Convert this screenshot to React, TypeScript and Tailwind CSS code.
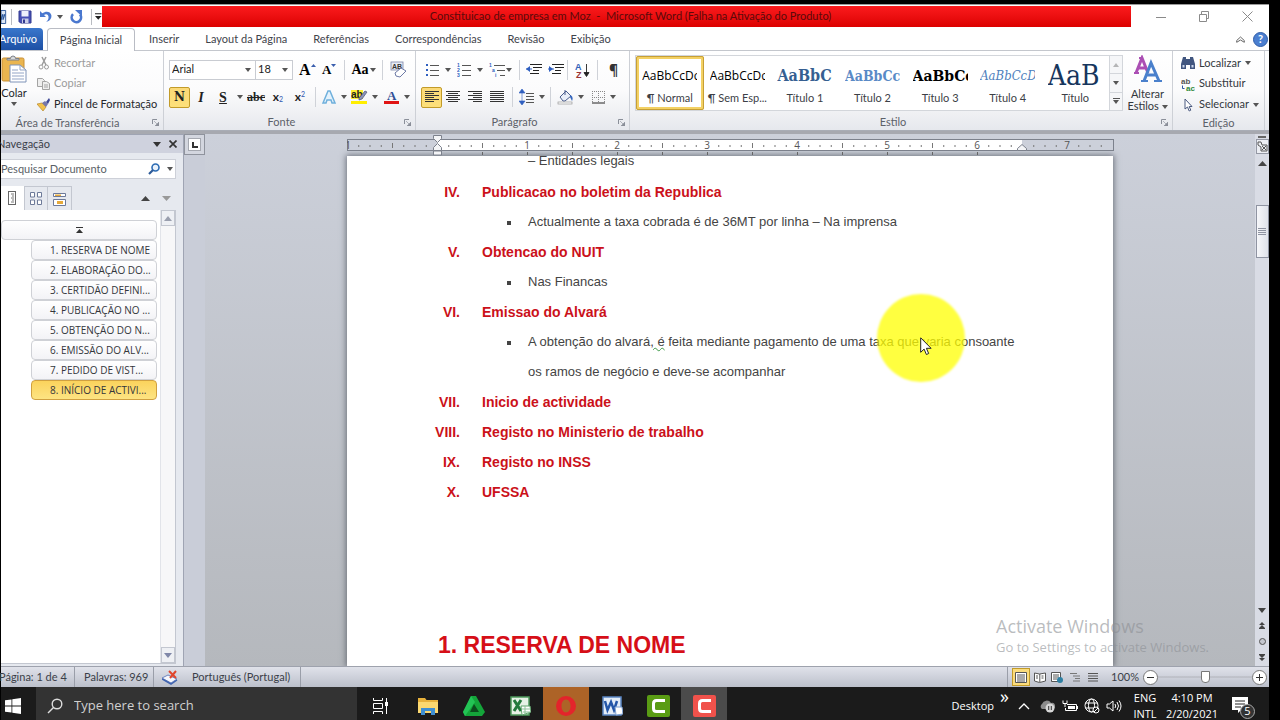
import React, { useState } from "react";

type Kids = { children?: React.ReactNode };

function Caret({ className = "" }: { className?: string }) {
  return (
    <svg width="6" height="4" viewBox="0 0 6 4" className={`shrink-0 ${className}`}>
      <path d="M0 0h6L3 4z" fill="#555" />
    </svg>
  );
}

function Sep() {
  return <div className="h-5 w-px shrink-0 bg-[#cfd2d8]" />;
}

function Tool({
  label,
  w = "w-[22px]",
  active = false,
  children,
}: Kids & { label: string; w?: string; active?: boolean }) {
  return (
    <button
      type="button"
      aria-label={label}
      className={`flex h-[21px] shrink-0 items-center justify-center ${w} ${
        active
          ? "rounded-xs border border-[#c29b29] bg-linear-to-b from-[#fbd977] to-[#fde07a]"
          : ""
      }`}
    >
      {children}
    </button>
  );
}

function Launcher() {
  return (
    <svg width="7" height="7" viewBox="0 0 7 7" className="absolute right-1 bottom-1">
      <path d="M0.500 5V0.500H5" fill="none" stroke="#8a8f99" />
      <path d="M2 2l3 3M7 3v4H3z" fill="#8a8f99" stroke="#8a8f99" strokeWidth="0.600" />
    </svg>
  );
}

function Group({
  title,
  className = "",
  launcher = true,
  children,
}: Kids & { title: string; className?: string; launcher?: boolean }) {
  return (
    <section
      className={`relative flex h-full flex-col border-r border-[#cdd0d6] ${className}`}
    >
      <div className="h-16">{children}</div>
      <h2 className={`text-center leading-4 text-[#5c6169] ${launcher ? "pr-4" : ""}`}>{title}</h2>
      {launcher && <Launcher />}
    </section>
  );
}

function Lines({
  rows,
  color = "#333",
}: {
  rows: [number, number][];
  color?: string;
}) {
  return (
    <svg width="14" height="12" viewBox="0 0 14 12">
      {rows.map(([x, w], i) => (
        <rect key={i} x={x} y={i * 2} width={w} height="1" fill={color} />
      ))}
    </svg>
  );
}

function TitleBar() {
  return (
    <header className="flex h-6 shrink-0 border-t border-[#9a9a9a] bg-white">
      <div className="flex w-[101px] shrink-0 items-center">
        <svg width="6" height="16" viewBox="0 0 6 16">
          <path d="M0 1h5v14H0z" fill="#dbe6f5" stroke="#2b579a" />
          <path d="M0 11l2-6M2 11l2-6" stroke="#2b579a" strokeWidth="1.500" />
        </svg>
        <div className="ml-1 h-4 w-px bg-[#b9bcc2]" />
        <Tool label="Salvar" w="w-[27px]">
          <svg width="14" height="14" viewBox="0 0 14 14">
            <path d="M1 1h12v12H2.500L1 11.500z" fill="#4750b4" stroke="#323a90" />
            <path d="M3.500 1h7v5.500h-7z" fill="#eef1fb" />
            <path d="M4 8.500h6.500V13H4z" fill="#c9cde8" />
            <path d="M5 9.500h2V13H5z" fill="#323a90" />
          </svg>
        </Tool>
        <Tool label="Desfazer" w="w-[14px]">
          <svg width="14" height="14" viewBox="0 0 14 14">
            <path d="M1 1v6h6L5 5c2.500-1.700 5 0 4.500 3-.2 1.700-1.200 3-2.500 4 4-1 6-4 5.300-7C11.500 1.500 7 .5 3.300 3.300z" fill="#4a78cf" />
          </svg>
        </Tool>
        <Caret className="mx-1" />
        <Tool label="Refazer" w="w-[20px]">
          <svg width="13" height="14" viewBox="0 0 13 14">
            <path d="M3 4.200A4.700 4.700 0 1 0 10 4.500" fill="none" stroke="#4a78cf" strokeWidth="2.600" />
            <path d="M5 0h7v6.500z" fill="#4a78cf" />
          </svg>
        </Tool>
        <div className="ml-1 h-4 w-px bg-[#b9bcc2]" />
        <svg width="7" height="7" viewBox="0 0 7 7" className="ml-1">
          <path d="M0 0h7v1H0zM0 3h7L3.500 7z" fill="#222" />
        </svg>
      </div>
      <h1 className="mt-px mb-px flex flex-1 items-center justify-center bg-linear-to-b from-[#fb1a1c] to-[#dc0000] pl-7 text-[#5a0a0a] whitespace-pre">
        Constituicao de empresa em Moz  -  Microsoft Word (Falha na Ativação do Produto)
      </h1>
      <div className="flex w-[138px] shrink-0 items-center text-[#8a8a8a]">
        <button type="button" aria-label="Minimizar" className="ml-[25px] w-[43px]">
          <svg width="11" height="11" viewBox="0 0 11 11"><path d="M0 6.500h10" stroke="currentColor" /></svg>
        </button>
        <button type="button" aria-label="Restaurar" className="w-[43px]">
          <svg width="11" height="11" viewBox="0 0 11 11" fill="none" stroke="currentColor">
            <path d="M.5 3.500h7v7h-7zM2.500 3V.5h7v7H8" />
          </svg>
        </button>
        <button type="button" aria-label="Fechar">
          <svg width="11" height="11" viewBox="0 0 11 11"><path d="M.5.5l10 10M10.500.5l-10 10" stroke="currentColor" /></svg>
        </button>
      </div>
    </header>
  );
}

const tabs = ["Inserir", "Layout da Página", "Referências", "Correspondências", "Revisão", "Exibição"];

function Tabs() {
  return (
    <nav className="flex h-[23px] shrink-0 border-b border-[#c4c7cd] bg-white text-[#3f444c]">
      <button type="button" className="flex w-[42px] items-center justify-end overflow-hidden rounded-tr-sm bg-linear-to-b from-[#3a77cc] to-[#1d50a5] pr-[6px] text-white">
        Arquivo
      </button>
      <button type="button" className="-mb-px ml-1 w-[88px] rounded-t-sm border border-b-0 border-[#b9bcc4] bg-white">
        Página Inicial
      </button>
      <div className="flex items-center gap-[26px] pl-[14px]">
        {tabs.map((t) => (
          <button key={t} type="button">{t}</button>
        ))}
      </div>
      <div className="ml-auto flex items-center gap-2">
        <button type="button" aria-label="Minimizar faixa">
          <svg width="9" height="7" viewBox="0 0 9 7"><path d="M.7 4.500L4.500 1l3.800 3.500v1.800L4.500 4 .7 6.300z" fill="none" stroke="#666" /></svg>
        </button>
        <button type="button" aria-label="Ajuda" className="mr-px flex h-[15px] w-[15px] items-center justify-center rounded-full border border-[#2f5da8] bg-[#4b7fd0] font-bold text-white">
          ?
        </button>
      </div>
    </nav>
  );
}

function Clipboard() {
  return (
    <Group title="Área de Transferência" className="-ml-[13px] w-[176px] shrink-0">
      <div className="flex pt-[2px] pl-[13px] text-[#24272c]">
        <button type="button" className="flex w-[26px] flex-col items-center pt-[2px]">
          <svg width="26" height="30" viewBox="0 0 26 30">
            <rect x="1" y="3" width="22" height="23" rx="1.500" fill="#eab54f" stroke="#c98f35" />
            <path d="M6 5h12V3.500h-3.500a2.500 2.500 0 0 0-5 0H6z" fill="#d7dade" stroke="#7c8087" />
            <path d="M9 10h10l6 5v12H9z" fill="#fff" stroke="#7f93b8" />
            <path d="M19 10v5h6M11 15h6M11 18h12M11 21h12M11 24h12" fill="none" stroke="#93a5c6" />
          </svg>
          <span className="leading-4">Colar</span>
          <Caret className="mt-px" />
        </button>
        <div className="ml-[10px] flex flex-col text-[#9b9b9b]">
          <button type="button" className="flex h-[20px] items-center gap-1">
            <svg width="13" height="14" viewBox="0 0 13 14" fill="none" stroke="#9b9b9b">
              <path d="M5 1l4 8M9 1L5 9" strokeWidth="1.500" />
              <circle cx="4" cy="11" r="2" />
              <circle cx="9.500" cy="11" r="2" />
            </svg>
            Recortar
          </button>
          <button type="button" className="flex h-[21px] items-center gap-1">
            <svg width="13" height="14" viewBox="0 0 13 14" fill="#eee" stroke="#a3a3a3">
              <path d="M.5 1.500h5l2 2v6h-7z" />
              <path d="M5.500 4.500h4l3 2v6h-7zM7 8h4M7 10h4" />
            </svg>
            Copiar
          </button>
          <button type="button" className="flex h-[21px] items-center gap-1 whitespace-nowrap text-[#24272c]">
            <svg width="13" height="14" viewBox="0 0 13 14">
              <path d="M0 6l5-1 4 4-3 4z" fill="#f2c14d" stroke="#b98a2b" strokeWidth=".7" />
              <path d="M5 5l3-2 3 3-2 3z" fill="#7777aa" />
              <path d="M9 4l3-4 1 2-2 4z" fill="#3f4896" />
            </svg>
            Pincel de Formatação
          </button>
        </div>
      </div>
    </Group>
  );
}

function Combo({ label, value, w }: { label: string; value: string; w: string }) {
  return (
    <label className={`relative flex h-5 items-center border border-[#c9ccd2] bg-white ${w}`}>
      <select aria-label={label} className="h-full w-full appearance-none bg-transparent pl-[2px] text-[#222]">
        <option>{value}</option>
      </select>
      <Caret className="absolute right-1" />
    </label>
  );
}

function FontGroup() {
  return (
    <Group title="Fonte" className="w-[252px] shrink-0">
      <div className="flex h-[37px] items-center pl-[5px]">
        <Combo label="Fonte" value="Arial" w="w-[93px]" />
        <Combo label="Tamanho da fonte" value="18" w="-ml-px w-[41px]" />
        <div className="w-[3px]" />
        <Tool label="Aumentar fonte">
          <span className="font-['Liberation_Serif',serif] text-[16px] font-bold">A</span>
          <svg width="5" height="4" viewBox="0 0 5 4" className="mb-2"><path d="M0 3h5L2.500 0z" fill="#3b5fae" /></svg>
        </Tool>
        <Tool label="Reduzir fonte">
          <span className="font-['Liberation_Serif',serif] text-[13px] font-bold">A</span>
          <svg width="5" height="4" viewBox="0 0 5 4" className="mb-2"><path d="M0 0h5L2.500 3z" fill="#3b5fae" /></svg>
        </Tool>
        <div className="w-1" />
        <Sep />
        <Tool label="Maiúsculas e minúsculas" w="w-[37px]">
          <span className="mr-px font-['Liberation_Serif',serif] text-[14px] font-bold">Aa</span>
          <Caret />
        </Tool>
        <Sep />
        <Tool label="Limpar formatação" w="w-[32px]">
          <svg width="17" height="17" viewBox="0 0 17 17">
            <rect x="1" y="1" width="12" height="8" fill="#e8ecf5" stroke="#7a86a8" strokeWidth=".8" />
            <text x="2" y="8" fontSize="7" fontFamily="Liberation Sans" fontWeight="700" fill="#333">AB</text>
            <path d="M5 12l6-5 5 3-6 6-4-1z" fill="#fff" stroke="#6d7aa6" />
          </svg>
        </Tool>
      </div>
      <div className="flex h-[18px] items-center pl-[5px] text-[#222]">
        <Tool label="Negrito" w="w-[21px]" active>
          <b className="font-['DejaVu_Serif',serif] text-[12px]">N</b>
        </Tool>
        <Tool label="Itálico"><i className="font-['Liberation_Serif',serif] text-[14px] font-bold">I</i></Tool>
        <Tool label="Sublinhado"><span className="font-['Liberation_Serif',serif] text-[14px] font-bold underline">S</span></Tool>
        <Tool label="Opções de sublinhado" w="w-[11px]"><Caret /></Tool>
        <Tool label="Tachado"><span className="font-['Liberation_Serif',serif] text-[12px] font-bold line-through">abc</span></Tool>
        <Tool label="Subscrito"><b className="text-[12px]">x</b><sub className="text-[7px] text-[#2d55b0]">2</sub></Tool>
        <Tool label="Sobrescrito"><b className="text-[12px]">x</b><sup className="text-[7px] text-[#2d55b0]">2</sup></Tool>
        <div className="w-1" />
        <Sep />
        <div className="w-1" />
        <Tool label="Efeitos de texto" w="w-[28px]">
          <svg width="16" height="16" viewBox="0 0 16 16" className="mr-1">
            <path d="M2 14L7 2h2l5 12h-3L10 11H6l-1 3z" fill="#e4f2fc" stroke="#6fb0dc" strokeWidth="1.500" />
          </svg>
          <Caret />
        </Tool>
        <Tool label="Realce" w="w-[33px]">
          <svg width="17" height="16" viewBox="0 0 17 16" className="mr-1">
            <rect y="1" width="12" height="9" fill="#ffee33" />
            <text x="0" y="9" fontSize="10" fontFamily="Liberation Sans" fontWeight="700" fill="#222">ab</text>
            <path d="M8 9l6-7 2 1-5 7-3 1z" fill="#8b93b8" stroke="#4b5374" strokeWidth=".7" />
            <rect y="12" width="16" height="3" fill="#ffee00" />
          </svg>
          <Caret />
        </Tool>
        <Tool label="Cor da fonte" w="w-[32px]">
          <svg width="16" height="16" viewBox="0 0 16 16" className="mr-1">
            <text x="3" y="11" fontSize="13" fontFamily="Liberation Serif" fontWeight="700" fill="#2f4f96">A</text>
            <rect y="12" width="15" height="3" fill="#e01414" />
          </svg>
          <Caret />
        </Tool>
      </div>
    </Group>
  );
}

const full: [number, number] = [0, 14];

function Bullets({ kind }: { kind: "dot" | "num" | "multi" }) {
  return (
    <svg width="16" height="14" viewBox="0 0 16 14">
      {[0, 1, 2].map((i) => {
        const x = kind === "multi" ? i * 3 : 0;
        return (
          <g key={i}>
            {kind === "dot" ? (
              <rect x="1" y={1 + i * 5} width="2" height="2" fill="#2f5fc0" />
            ) : (
              <text x={x} y={4 + i * 5} fontSize="5" fontFamily="Liberation Sans" fontWeight="700" fill="#2f5fc0">
                {kind === "num" ? i + 1 : ["1", "a", "i"][i]}
              </text>
            )}
            <rect x={x + 5} y={2 + i * 5} width={kind === "multi" ? 11 - x : 9} height="1" fill="#555" />
          </g>
        );
      })}
    </svg>
  );
}

function Indent({ out = false }: { out?: boolean }) {
  return (
    <svg width="16" height="13" viewBox="0 0 16 13">
      <path d="M4 1.500h12M7 4.500h9M7 7.500h6M4 10.500h9" stroke="#222" />
      <path d={out ? "M0 6l4-3v6z" : "M5 6L1 3v6z"} fill="#2f5fc0" />
      <path d="M4 6h2M0 6h2" stroke="#2f5fc0" />
    </svg>
  );
}

function ParagraphGroup() {
  return (
    <Group title="Parágrafo" className="w-[214px] shrink-0">
      <div className="flex h-[37px] items-center pl-[6px]">
        <Tool label="Marcadores" w="w-[32px]"><Bullets kind="dot" /><Caret className="ml-1" /></Tool>
        <Tool label="Numeração" w="w-[32px]"><Bullets kind="num" /><Caret className="ml-1" /></Tool>
        <Tool label="Lista de vários níveis" w="w-[29px]"><Bullets kind="multi" /><Caret className="ml-px" /></Tool>
        <div className="w-1" />
        <Sep />
        <div className="w-1" />
        <Tool label="Diminuir recuo"><Indent out /></Tool>
        <Tool label="Aumentar recuo"><Indent /></Tool>
        <Sep />
        <Tool label="Classificar" w="w-[29px]">
          <svg width="15" height="16" viewBox="0 0 15 16">
            <text x="0" y="8" fontSize="9" fontFamily="Liberation Sans" fontWeight="700" fill="#2f5fb8">A</text>
            <text x="1" y="16" fontSize="9" fontFamily="Liberation Sans" fontWeight="700" fill="#9a3434">Z</text>
            <path d="M11.500 2v11M9 10.500h5l-2.500 4z" stroke="#222" fill="#222" strokeWidth=".9" />
          </svg>
        </Tool>
        <Sep />
        <Tool label="Mostrar tudo" w="w-[31px]"><b className="font-['Open_Sans',sans-serif] text-[14px] text-[#333]">¶</b></Tool>
      </div>
      <div className="flex h-[18px] items-center pl-[5px]">
        <Tool label="Alinhar à esquerda" w="w-[21px]" active>
          <Lines rows={[full, [0, 9], full, [0, 9], full, [0, 9]]} />
        </Tool>
        <Tool label="Centralizar"><Lines rows={[full, [2, 10], full, [2, 10], full, [2, 10]]} /></Tool>
        <Tool label="Alinhar à direita"><Lines rows={[full, [5, 9], full, [5, 9], full, [5, 9]]} /></Tool>
        <Tool label="Justificar"><Lines rows={[full, full, full, full, full, full]} /></Tool>
        <div className="w-1" />
        <Sep />
        <Tool label="Espaçamento" w="w-[37px]">
          <svg width="16" height="16" viewBox="0 0 16 16">
            <path d="M3 0L0 4h6zM3 16l-3-4h6zM3 3v10" fill="#2f5fc0" stroke="#2f5fc0" strokeWidth=".6" />
            <path d="M7 4.500h8M7 7.500h8M7 10.500h8M7 13.500h8" stroke="#555" />
          </svg>
          <Caret className="ml-1" />
        </Tool>
        <Sep />
        <Tool label="Sombreamento" w="w-[38px]">
          <svg width="17" height="16" viewBox="0 0 17 16">
            <path d="M3 8l6-6 5 5-6 5H6z" fill="#e9eef8" stroke="#4a5d8c" />
            <path d="M8 1v5" stroke="#4a5d8c" />
            <path d="M13 6c3 1 3 4 2 6l-2-4z" fill="#3566bd" />
            <rect x="1" y="13" width="14" height="2" fill="#fff" stroke="#999" strokeWidth=".7" />
          </svg>
          <Caret className="ml-1" />
        </Tool>
        <Tool label="Bordas" w="w-[30px]">
          <svg width="14" height="13" viewBox="0 0 14 13">
            <path d="M.5 0v12M6.500 0v12M12.500 0v12M0 .5h13M0 6.500h13" stroke="#888" strokeDasharray="1 1" />
            <path d="M0 12h13" stroke="#222" />
          </svg>
          <Caret className="ml-1" />
        </Tool>
      </div>
    </Group>
  );
}

const styles = [
  { name: "¶ Normal", sample: "AaBbCcDc", cls: "font-['Open_Sans',sans-serif] text-[12px] text-black" },
  { name: "¶ Sem Esp...", sample: "AaBbCcDc", cls: "font-['Open_Sans',sans-serif] text-[12px] text-black" },
  { name: "Título 1", sample: "AaBbCc", cls: "font-['DejaVu_Serif_Condensed','DejaVu_Serif',serif] text-[16px] font-bold text-[#365f91]" },
  { name: "Título 2", sample: "AaBbCc", cls: "font-['DejaVu_Serif_Condensed','DejaVu_Serif',serif] text-[14px] font-bold text-[#5a8ac6]" },
  { name: "Título 3", sample: "AaBbCc", cls: "font-['DejaVu_Serif',serif] text-[14px] font-bold text-black" },
  { name: "Título 4", sample: "AaBbCcD", cls: "font-['DejaVu_Serif_Condensed','DejaVu_Serif',serif] text-[13px] italic text-[#4f81bd]" },
  { name: "Título", sample: "AaB", cls: "font-['DejaVu_Serif_Condensed','DejaVu_Serif',serif] text-[28px] text-[#17365d]" },
];

function StylesGroup() {
  return (
    <Group title="Estilo" className="min-w-0 flex-1">
      <div className="flex pt-1 pl-[5px]">
        <div className="flex h-[56px] min-w-0 flex-1 border border-[#d3d6db] bg-white">
          {styles.map((s, i) => (
            <button
              key={s.name}
              type="button"
              className={`flex min-w-0 flex-1 flex-col items-center overflow-hidden border-3 pt-[2px] ${
                i === 0
                  ? "rounded-xs border-[#f3d164] outline-1 -outline-offset-1 outline-[#c79f35]"
                  : "border-transparent"
              }`}
            >
              <span className={`flex h-[30px] w-[55px] items-center overflow-hidden ${s.cls}`}>
                {s.sample}
              </span>
              <span className="leading-[14px] whitespace-nowrap text-[#3c4046]">{s.name}</span>
            </button>
          ))}
          <div className="flex w-[13px] shrink-0 flex-col divide-y divide-[#d3d6db] border-l border-[#d3d6db] bg-[#f5f6f8]">
            <button type="button" aria-label="Anterior" className="flex flex-1 items-center justify-center"><Caret className="rotate-180 opacity-40" /></button>
            <button type="button" aria-label="Próximo" className="flex flex-1 items-center justify-center"><Caret /></button>
            <button type="button" aria-label="Mais" className="flex flex-1 flex-col items-center justify-center gap-px">
              <span className="h-px w-[7px] bg-[#555]" />
              <Caret />
            </button>
          </div>
        </div>
        <button type="button" className="flex w-[49px] flex-col items-center">
          <svg width="28" height="33" viewBox="0 0 28 33" fill="none" strokeWidth="3">
            <path d="M2 18L8 3l6 15M4 13h8" stroke="#ab4fb4" />
            <path d="M0 18h5M5 3h4" stroke="#ab4fb4" strokeWidth="2" />
            <path d="M10 26l7-18 8 18M13 20h9" stroke="#4a80cc" />
            <path d="M7 26h7M20 26h8" stroke="#4a80cc" strokeWidth="2" />
          </svg>
          <span className="leading-3 text-[#33373d]">
            Alterar<br />Estilos <Caret className="inline" />
          </span>
        </button>
      </div>
    </Group>
  );
}

function EditGroup() {
  return (
    <Group title="Edição" className="w-[92px] shrink-0" launcher={false}>
      <div className="flex flex-col pt-[2px] pl-2 text-[#33373d]">
        <button type="button" className="flex h-5 items-center gap-1">
          <svg width="14" height="14" viewBox="0 0 14 14" fill="#41557f">
            <path d="M2 1h3v2h4V1h3l2 7v5H9V9H5v4H0V8z" />
            <path d="M1.500 9h2v2.500h-2zM10.500 9h2v2.500h-2z" fill="#cdd8ee" />
          </svg>
          Localizar <Caret />
        </button>
        <button type="button" className="flex h-[21px] items-center gap-1">
          <svg width="14" height="14" viewBox="0 0 14 14" fontFamily="Liberation Sans" fontWeight="700" fontSize="8">
            <text x="0" y="7" fill="#555">ab</text>
            <text x="5" y="14" fill="#2f8a3a">ac</text>
            <path d="M1.500 8.500v3h2" fill="none" stroke="#2f55a0" />
          </svg>
          Substituir
        </button>
        <button type="button" className="flex h-[21px] items-center gap-1">
          <svg width="14" height="14" viewBox="0 0 14 14">
            <path d="M4 1v10l2.500-2 1.700 4 1.600-.8L8.200 8.500H11z" fill="#fff" stroke="#4a5a80" />
          </svg>
          Selecionar <Caret />
        </button>
      </div>
    </Group>
  );
}

const headings = [
  "1. RESERVA DE NOME",
  "2. ELABORAÇÃO DO...",
  "3. CERTIDÃO DEFINI...",
  "4. PUBLICAÇÃO NO ...",
  "5. OBTENÇÃO DO N...",
  "6. EMISSÃO DO ALV...",
  "7. PEDIDO DE VIST...",
  "8. INÍCIO DE ACTIVI...",
];

function Navigation() {
  const [current, setCurrent] = useState(7);
  return (
    <aside className="flex w-[183px] shrink-0 flex-col border-t border-r border-[#9fa4b3] bg-[#e6e9ef] pb-[2px]">
      <div className="flex h-[18px] items-center bg-[#cfd2de] pr-[6px] text-[#3b3f49]">
        <h2 className="-ml-1 flex-1">Navegação</h2>
        <svg width="8" height="5" viewBox="0 0 8 5"><path d="M0 0h8L4 5z" fill="#333" /></svg>
        <button type="button" aria-label="Fechar painel" className="ml-2">
          <svg width="8" height="8" viewBox="0 0 8 8"><path d="M.5.5l7 7M7.500.5l-7 7" stroke="#333" strokeWidth="1.700" /></svg>
        </button>
      </div>
      <div className="mt-[6px] mr-[7px] flex h-5 items-center border border-l-0 border-[#cdd0d8] bg-white pr-[2px]">
        <input
          type="text"
          aria-label="Pesquisar Documento"
          placeholder="Pesquisar Documento"
          className="min-w-0 flex-1 placeholder:text-[#5a5f67]"
        />
        <svg width="12" height="12" viewBox="0 0 12 12" className="mr-[7px]">
          <circle cx="7.500" cy="4.500" r="3.500" fill="#eaf2fb" stroke="#2c6bb3" strokeWidth="1.600" />
          <path d="M5 7l-4 4" stroke="#2c5a99" strokeWidth="2.200" />
        </svg>
        <Caret />
      </div>
      <div className="mt-[7px] flex h-6 items-stretch">
        <button type="button" aria-label="Títulos" className="flex w-[23px] items-center justify-center bg-white">
          <svg width="9" height="14" viewBox="0 0 9 14">
            <rect x=".5" y=".5" width="7" height="13" fill="#fff" stroke="#666" />
            <path d="M3 3h3M4 5h2M3 7h3M4 9h2M3 11h3" stroke="#777" />
          </svg>
        </button>
        <button type="button" aria-label="Páginas" className="flex w-6 items-center justify-center border border-b-0 border-[#c3c7d0]">
          <svg width="12" height="13" viewBox="0 0 12 13" fill="#fff" stroke="#6d7a99">
            <path d="M.5.5h4v4.500h-4zM7.500.5h4v4.500h-4zM.5 8h4v4.500h-4zM7.500 8h4v4.500h-4z" />
          </svg>
        </button>
        <button type="button" aria-label="Resultados" className="flex w-6 items-center justify-center border border-b-0 border-l-0 border-[#c3c7d0]">
          <svg width="13" height="14" viewBox="0 0 13 14">
            <path d="M.5 1.500h12v3H.5zM.5 7.500h12v6H.5z" fill="#fff" stroke="#6d7a99" />
            <path d="M2 2.500h6v1.500H2zM4 9h6v3H4z" fill="#e5a93a" />
          </svg>
        </button>
        <div className="ml-auto flex items-center gap-3 pr-3">
          <svg width="9" height="5" viewBox="0 0 9 5"><path d="M0 5h9L4.500 0z" fill="#444" /></svg>
          <svg width="9" height="5" viewBox="0 0 9 5"><path d="M0 0h9L4.500 5z" fill="#999" /></svg>
        </div>
      </div>
      <div className="mr-[7px] flex min-h-0 flex-1 border-r border-b border-[#c3c7d0] bg-white">
        <div className="min-w-0 flex-1 pt-[10px] pr-[3px]">
          <button type="button" aria-label="Ir para o início" className="flex h-5 w-full items-center justify-center rounded-sm border border-[#cfd1d6] bg-linear-to-b from-white to-[#f3f3f6]">
            <svg width="7" height="6" viewBox="0 0 7 6"><path d="M0 0h7v1H0zM0 6h7L3.500 2z" fill="#333" /></svg>
          </button>
          <ul className="pl-[30px] font-['Open_Sans','Noto_Sans',sans-serif] text-[10px]">
            {headings.map((h, i) => (
              <li key={h}>
                <button
                  type="button"
                  onClick={() => setCurrent(i)}
                  className={`flex h-5 w-full items-center rounded-sm border pl-[18px] whitespace-nowrap text-[#33363b] ${
                    i === current
                      ? "border-[#d0a040] bg-linear-to-b from-[#fbd35c] to-[#fde482]"
                      : "border-[#cfd1d6] bg-linear-to-b from-white to-[#f3f3f6]"
                  }`}
                >
                  {h}
                </button>
              </li>
            ))}
          </ul>
        </div>
        <div className="flex w-[15px] flex-col justify-between border-l border-[#e2e4e9] bg-[#f7f7f8]">
          <button type="button" aria-label="Rolar para cima" className="flex h-4 items-center justify-center border border-[#c3c7d0] bg-[#eef0f4]">
            <svg width="8" height="5" viewBox="0 0 8 5"><path d="M0 5h8L4 0z" fill="#9a9fae" /></svg>
          </button>
          <button type="button" aria-label="Rolar para baixo" className="flex h-4 items-center justify-center border border-[#c3c7d0] bg-[#eef0f4]">
            <svg width="8" height="5" viewBox="0 0 8 5"><path d="M0 0h8L4 5z" fill="#7f87a8" /></svg>
          </button>
        </div>
      </div>
    </aside>
  );
}

function Ruler() {
  const marks = [];
  for (let i = -7; i <= 59; i++) {
    if (i === 0 || i === 52) continue;
    const x = 90 + i * 11.25;
    if (i % 8 === 0) {
      marks.push(<text key={i} x={x} y="10" textAnchor="middle" fontSize="10" fontFamily="Open Sans" fill="#555">{i / 8}</text>);
    } else if (i % 4 === 0) {
      marks.push(<rect key={i} x={x} y="4" width="1" height="5" fill="#777" />);
    } else {
      marks.push(<rect key={i} x={x} y="6" width="1" height="2" fill="#777" />);
    }
  }
  return (
    <svg width="767" height="22" viewBox="0 -5 767 22" className="block">
      <rect x=".5" y=".5" width="766" height="11" fill="#ccd0da" stroke="#7c818c" />
      <rect x="90" y="1" width="585" height="10" fill="#fff" />
      <text x="1" y="10" fontSize="10" fontFamily="Open Sans" fill="#555" textAnchor="middle">1</text>
      {marks}
      {Array.from({ length: 12 }, (_, i) => (
        <rect key={i} x={135 + i * 45} y="13" width="1" height="3" fill="#666" />
      ))}
      <path d="M86.500-3.500h8v3l-4 4-4-4zM86.500 11.500v-3l4-4 4 4v3zM86.500 12h8v4h-8z" fill="#f4f5f7" stroke="#7c818c" />
      <path d="M670.500 11.500v-2l4.500-4 4.500 4v2z" fill="#f4f5f7" stroke="#7c818c" />
    </svg>
  );
}

type Item = { num: string; title: string; points?: React.ReactNode[] };

const items: Item[] = [
  {
    num: "IV.",
    title: "Publicacao no boletim da Republica",
    points: ["Actualmente a taxa cobrada é de 36MT por linha – Na imprensa"],
  },
  { num: "V.", title: "Obtencao do NUIT", points: ["Nas Financas"] },
  {
    num: "VI.",
    title: "Emissao do Alvará",
    points: [
      <>
        A obtenção do alvará
        <span className="underline decoration-[#3f9a4a] decoration-wavy decoration-1">, é</span> feita
        mediante pagamento de uma taxa que varia consoante
        <br />
        os ramos de negócio e deve-se acompanhar
      </>,
    ],
  },
  { num: "VII.", title: "Inicio de actividade" },
  { num: "VIII.", title: "Registo no Ministerio de trabalho" },
  { num: "IX.", title: "Registo no INSS" },
  { num: "X.", title: "UFSSA" },
];

function Page() {
  return (
    <main className="relative mx-auto min-h-0 w-[766px] flex-1">
      <div className="h-full overflow-hidden bg-white font-['Liberation_Sans',Arial,sans-serif] text-[13px] leading-[30px] text-[#444] shadow-[0_0_6px_1px_rgba(70,75,85,0.7)]">
        <p className="-mt-[10px] pl-[181px]">– Entidades legais</p>
        <ol className="pt-px">
          {items.map((it) => (
            <li key={it.num}>
              <h3 className="flex text-[14px] font-bold text-[#cb111a]">
                <span className="w-[113px] text-right">{it.num}</span>
                <span className="pl-[22px]">{it.title}</span>
              </h3>
              {it.points && (
                <ul>
                  {it.points.map((p, i) => (
                    <li key={i} className="flex pl-[160px] whitespace-nowrap">
                      <span className="mt-[14px] mr-[17px] h-1 w-1 shrink-0 bg-[#444]" />
                      <span>{p}</span>
                    </li>
                  ))}
                </ul>
              )}
            </li>
          ))}
        </ol>
        <h2 className="mt-[123px] pl-[91px] text-[23px] font-bold text-[#d60f18]">1. RESERVA DE NOME</h2>
      </div>
      <div className="absolute top-[138px] left-[530px] h-[88px] w-[88px] rounded-full bg-[#ffff00]/75 blur-[1px]" />
      <svg width="12" height="19" viewBox="0 0 12 19" className="absolute top-[181px] left-[573px]">
        <path d="M.7.8v14.500l3.400-3.200 2.300 5.400 2.300-1-2.300-5.200h4.700z" fill="#fff" stroke="#222" />
      </svg>
      <div className="absolute bottom-[9px] left-[649px] font-['Open_Sans','Noto_Sans',sans-serif] whitespace-nowrap text-[#8c8f94]/60">
        <p className="text-[18px] leading-[22px]">Activate Windows</p>
        <p className="text-[13px] leading-5">Go to Settings to activate Windows.</p>
      </div>
    </main>
  );
}

function ScrollBar() {
  return (
    <div className="flex w-[14px] shrink-0 flex-col items-center bg-[#d9dce5]">
      <div className="mt-[2px] h-[2px] w-2 bg-[#666]" />
      <button type="button" aria-label="Régua" className="mt-px flex h-[15px] w-[13px] items-center justify-center border border-[#9498a4] bg-[#eceef3]">
        <svg width="11" height="11" viewBox="0 0 11 11"><path d="M1 1h3l1 3h5v6H4V6L1 4zM5 5l4 4M9 5L5 9" fill="none" stroke="#555" /></svg>
      </button>
      <svg width="9" height="5" viewBox="0 0 9 5" className="mt-[7px]"><path d="M0 5h9L4.500 0z" fill="#444" /></svg>
      <div className="mt-[39px] flex h-[53px] w-[13px] flex-col items-center justify-center gap-px border border-[#8f94a2] bg-linear-to-r from-[#f6f7fa] to-[#dfe2ea]">
        {[0, 1, 2, 3].map((i) => (
          <span key={i} className="h-px w-2 bg-[#8f94a2]" />
        ))}
      </div>
      <div className="mt-auto flex flex-col items-center gap-[9px] pb-[5px]">
        <svg width="8" height="5" viewBox="0 0 8 5"><path d="M0 0h8L4 5z" fill="#444" /></svg>
        <svg width="6" height="7" viewBox="0 0 6 7"><path d="M0 3h6L3 0zM0 6h6L3 3zM0 6h6v1H0z" fill="#444" /></svg>
        <svg width="7" height="7" viewBox="0 0 7 7"><circle cx="3.500" cy="3.500" r="3" fill="#c5c8d0" stroke="#555" /></svg>
        <svg width="6" height="7" viewBox="0 0 6 7"><path d="M0 0h6v1H0zM0 1h6L3 4zM0 4h6L3 7z" fill="#444" /></svg>
      </div>
    </div>
  );
}

function StatusBar() {
  const [zoom, setZoom] = useState(50);
  return (
    <footer className="flex h-[21px] shrink-0 items-center border-t border-[#9ea2ad] bg-linear-to-b from-[#e0e2ea] to-[#bcc0cb] text-[#3b3f49]">
      <span className="-ml-[2px] w-[75px]">Página: 1 de 4</span>
      <div className="h-full w-px bg-[#9a9ea9]" />
      <span className="w-[78px] pl-[9px]">Palavras: 969</span>
      <div className="h-full w-px bg-[#9a9ea9]" />
      <svg width="16" height="15" viewBox="0 0 16 15" className="ml-2">
        <path d="M0 8l6-3 9 4-6 4z" fill="#f5f7fc" stroke="#6f86c0" />
        <path d="M0 9l9 5 6-4" fill="none" stroke="#3f63b0" strokeWidth="1.500" />
        <path d="M7 1l7 7M14 1L8 8" stroke="#e0452c" strokeWidth="2" />
      </svg>
      <span className="w-[122px] pl-[14px]">Português (Portugal)</span>
      <div className="h-full w-px bg-[#9a9ea9]" />
      <div className="ml-auto h-full w-px bg-[#9a9ea9]" />
      <button type="button" aria-label="Layout de impressão" className="ml-1 flex h-[18px] w-[18px] items-center justify-center border border-[#c29b29] bg-[#fbdc7c]">
        <svg width="12" height="11" viewBox="0 0 12 11"><path d="M.5.5h11v10H.5zM2 3h8M2 5h8M2 7h8M2 9h8" fill="#fff" stroke="#555" /></svg>
      </button>
      <div className="ml-1 flex items-center gap-[5px]">
        <svg width="12" height="11" viewBox="0 0 12 11" fill="#fff" stroke="#555"><path d="M.5 1l5 1 6-1v8l-6 1.500-5-1.500zM5.800 2v8M2 4h2M2 6h2M7.500 4h2M7.500 6h2" /></svg>
        <svg width="12" height="11" viewBox="0 0 12 11"><path d="M.5.5h9v9h-9zM2 3h6M2 5h6M2 7h4" fill="#fff" stroke="#555" /><circle cx="9" cy="8" r="3" fill="#2d7fa3" /></svg>
        <svg width="12" height="11" viewBox="0 0 12 11" className="ml-px"><path d="M1 1.500h7M4 4h7M6 6.500h5M4 9h7" stroke="#777" /></svg>
        <svg width="12" height="11" viewBox="0 0 12 11" className="ml-px"><path d="M1 1.500h10M1 4h10M1 6.500h10M1 9h10" stroke="#555" /></svg>
      </div>
      <span className="ml-3 w-8">100%</span>
      <button type="button" aria-label="Reduzir" className="flex h-[15px] w-[15px] items-center justify-center rounded-full border border-[#777] bg-white">
        <span className="h-px w-[7px] bg-[#333]" />
      </button>
      <input
        type="range"
        aria-label="Zoom"
        value={zoom}
        onChange={(e) => setZoom(Number(e.target.value))}
        className="h-3 w-[94px] appearance-none bg-linear-to-b from-transparent from-45% via-[#777] via-50% to-transparent to-55% [&::-webkit-slider-thumb]:h-3 [&::-webkit-slider-thumb]:w-[9px] [&::-webkit-slider-thumb]:appearance-none [&::-webkit-slider-thumb]:rounded-b-sm [&::-webkit-slider-thumb]:border [&::-webkit-slider-thumb]:border-[#777] [&::-webkit-slider-thumb]:bg-white"
      />
      <button type="button" aria-label="Ampliar" className="mr-[2px] flex h-[15px] w-[15px] items-center justify-center rounded-full border border-[#777] bg-white">
        <svg width="7" height="7" viewBox="0 0 7 7"><path d="M0 3.500h7M3.500 0v7" stroke="#333" /></svg>
      </button>
    </footer>
  );
}

function Task({ label, bg = "", children }: Kids & { label: string; bg?: string }) {
  return (
    <button type="button" aria-label={label} className={`flex h-[38px] w-[46px] items-center justify-center ${bg}`}>
      {children}
    </button>
  );
}

function Camtasia({ fill }: { fill: string }) {
  return (
    <svg width="23" height="22" viewBox="0 0 23 22">
      <rect width="23" height="22" rx="2" fill={fill} />
      <path d="M18 5.500H9.500Q6.500 5.500 6.500 8.500v5q0 3 3 3H18" fill="none" stroke="#fff" strokeWidth="3" />
    </svg>
  );
}

function Taskbar() {
  return (
    <div className="flex h-[33px] shrink-0 items-start overflow-hidden bg-[#1b1b1b] font-['Open_Sans','Noto_Sans',sans-serif] text-white">
      <button type="button" aria-label="Start" className="flex h-[38px] w-[35px] items-center pl-1">
        <svg width="16" height="16" viewBox="0 0 16 16" fill="#fff">
          <path d="M0 2.300l6.500-.9v6.100H0zM7.300 1.300L16 0v7.500H7.300zM0 8.400h6.500v6.200L0 13.700zM7.300 8.400H16V16l-8.700-1.300z" />
        </svg>
      </button>
      <label className="flex h-[38px] w-[321px] items-center bg-[#333] pl-[11px]">
        <svg width="16" height="16" viewBox="0 0 16 16" fill="none" stroke="#ddd" strokeWidth="1.400">
          <circle cx="10" cy="6" r="4.800" />
          <path d="M6.500 9.500L1 15" />
        </svg>
        <input
          type="text"
          aria-label="Search"
          placeholder="Type here to search"
          className="ml-[11px] flex-1 text-[13px] placeholder:text-[#d0d0d0]"
        />
      </label>
      <Task label="Task view">
        <svg width="17" height="16" viewBox="0 0 17 16" fill="none" stroke="#fff">
          <path d="M1.500 0v2.500h9V0M1.500 5.500h9v5h-9zM1.500 16v-2.500h9V16M14.500 0v16" />
          <path d="M13 4h3v4h-3z" fill="#fff" stroke="none" />
        </svg>
      </Task>
      <div className="w-[2px]" />
      <Task label="File Explorer">
        <svg width="20" height="18" viewBox="0 0 20 18">
          <path d="M0 1h7l1.500 2H20v13H0z" fill="#e8b23c" />
          <path d="M0 5h20v11H0z" fill="#fbd870" />
          <path d="M3 18v-7h14v7h-4v-4H7v4z" fill="#3f8fd2" />
        </svg>
      </Task>
      <Task label="App">
        <svg width="22" height="20" viewBox="0 0 22 20">
          <path d="M8 0h5l9 16-3 4H2l-2-4z" fill="#14a53a" />
          <path d="M8 0L0 16l2 4L12 6z" fill="#23c455" />
          <path d="M11 8l5 8H7z" fill="#0b4d1d" />
        </svg>
      </Task>
      <Task label="Excel">
        <svg width="21" height="20" viewBox="0 0 21 20">
          <path d="M1 1h18v18H1z" fill="#e6f2e6" stroke="#4d9a5c" strokeWidth="1.500" />
          <path d="M4 4l7 11M11 4L4 15" stroke="#237a3c" strokeWidth="3" />
          <path d="M11 10h9l1 6-9 3z" fill="#fff" stroke="#5fa56c" />
          <path d="M12 13h8M13 16h7M15 10v8" stroke="#8dc198" />
        </svg>
      </Task>
      <Task label="Opera" bg="bg-[#ad6327]">
        <svg width="20" height="20" viewBox="0 0 20 20">
          <path fillRule="evenodd" d="M10 0a10 10 0 1 0 0 20 10 10 0 0 0 0-20zm0 3.500c3 0 4.500 3 4.500 6.500s-1.500 6.500-4.500 6.500S5.500 13.500 5.500 10 7 3.500 10 3.500z" fill="#e3242b" />
        </svg>
      </Task>
      <Task label="Word">
        <svg width="21" height="20" viewBox="0 0 21 20">
          <path d="M1 1h18v18H1z" fill="#e4edf8" stroke="#5b86c4" strokeWidth="1.500" />
          <path d="M3 5l2.500 9L9 6l3 8 3-9" fill="none" stroke="#2456a8" strokeWidth="2.500" />
          <path d="M13 11h7l1 7-7 1z" fill="#fff" stroke="#7da0d2" />
        </svg>
      </Task>
      <Task label="Camtasia"><Camtasia fill="#5a9c14" /></Task>
      <Task label="Camtasia Recorder" bg="bg-[#4b4b4b]"><Camtasia fill="#f0524b" /></Task>
      <div className="ml-auto flex h-[38px] items-center">
        <span>Desktop</span>
        <span className="mb-5 ml-[6px] w-[14px] text-[18px] leading-4">»</span>
        <svg width="12" height="7" viewBox="0 0 12 7" className="ml-1"><path d="M1 6l5-5 5 5" fill="none" stroke="#fff" strokeWidth="1.300" /></svg>
        <svg width="16" height="14" viewBox="0 0 16 14" className="ml-[9px]">
          <path d="M3 10a3 3 0 0 1 0-5 5 5 0 0 1 9-1 3 3 0 0 1 2 6z" fill="#8c8c8c" />
          <circle cx="11" cy="9" r="4.500" fill="#d6d6d6" />
          <path d="M9.700 7v4M12.300 7v4" stroke="#333" />
        </svg>
        <svg width="16" height="13" viewBox="0 0 16 13" fill="none" stroke="#fff" className="ml-[7px]">
          <path d="M5 4.500h9.500v6H3.500V8M15.500 6v3M1 .5v3h4v-3M3 3.500V7" />
          <path d="M6 6h7v3H6z" fill="#fff" stroke="none" />
        </svg>
        <svg width="16" height="16" viewBox="0 0 16 16" fill="none" stroke="#fff" className="ml-[6px]">
          <circle cx="7.500" cy="7.500" r="6.500" />
          <ellipse cx="7.500" cy="7.500" rx="3" ry="6.500" />
          <path d="M1.500 5h12M1.500 10h12" />
          <circle cx="12" cy="12" r="3" fill="#1b1b1b" />
          <path d="M10 14l4-4" />
        </svg>
        <svg width="16" height="14" viewBox="0 0 16 14" fill="none" stroke="#fff" className="ml-[6px]">
          <path d="M1 5h2.500L7 2v10L3.500 9H1zM9 5q1.500 2 0 4M11 3q3 4 0 8M13 1.500q4 5.500 0 11" />
        </svg>
        <div className="ml-[10px] w-[26px] text-center leading-4"><p>ENG</p><p>INTL</p></div>
        <div className="ml-1 w-[60px] text-center leading-4"><p>4:10 PM</p><p>2/20/2021</p></div>
        <div className="relative mr-[15px] ml-[10px] h-5 w-[22px]">
          <svg width="17" height="18" viewBox="0 0 17 18"><path d="M0 1h16v13H9l-3 3v-3H0z" fill="#fff" /><path d="M3 5h10M3 8h10M3 11h6" stroke="#222" /></svg>
          <span className="absolute top-2 left-2 flex h-[15px] w-[15px] items-center justify-center rounded-full border border-[#aaa] bg-[#333] text-[11px]">5</span>
        </div>
      </div>
    </div>
  );
}

export default function App() {
  return (
    <div className="flex h-screen flex-col overflow-hidden bg-black pt-1 pr-[11px] pl-px font-['Lato','Open_Sans',sans-serif] text-[11px]">
      <TitleBar />
      <Tabs />
      <div className="flex h-[80px] shrink-0 overflow-hidden border-b border-[#a9adb6] bg-linear-to-b from-white via-[#fbfbfc] to-[#e6e8ed] pr-1">
        <Clipboard />
        <FontGroup />
        <ParagraphGroup />
        <StylesGroup />
        <EditGroup />
      </div>
      <div className="h-[3px] shrink-0 bg-[#a7a9b0]" />
      <div className="flex min-h-0 flex-1">
        <Navigation />
        <div className="w-[21px] shrink-0 bg-[#c9cdd8]">
          <button type="button" aria-label="Tabulação" className="flex h-[21px] w-[21px] items-center justify-center border border-[#8f939d] bg-[#d3d6df]">
            <span className="flex h-[13px] w-[13px] items-center justify-center border border-[#a5a8b0] bg-white">
              <svg width="6" height="6" viewBox="0 0 6 6"><path d="M1 0v5h5" fill="none" stroke="#333" strokeWidth="2" /></svg>
            </span>
          </button>
        </div>
        <div className="flex min-w-0 flex-1 flex-col overflow-hidden bg-linear-to-b from-[#ccd0da] to-[#b5b8bd]">
          <div className="z-10 mx-auto w-[766px]"><Ruler /></div>
          <Page />
        </div>
        <ScrollBar />
      </div>
      <StatusBar />
      <Taskbar />
    </div>
  );
}
